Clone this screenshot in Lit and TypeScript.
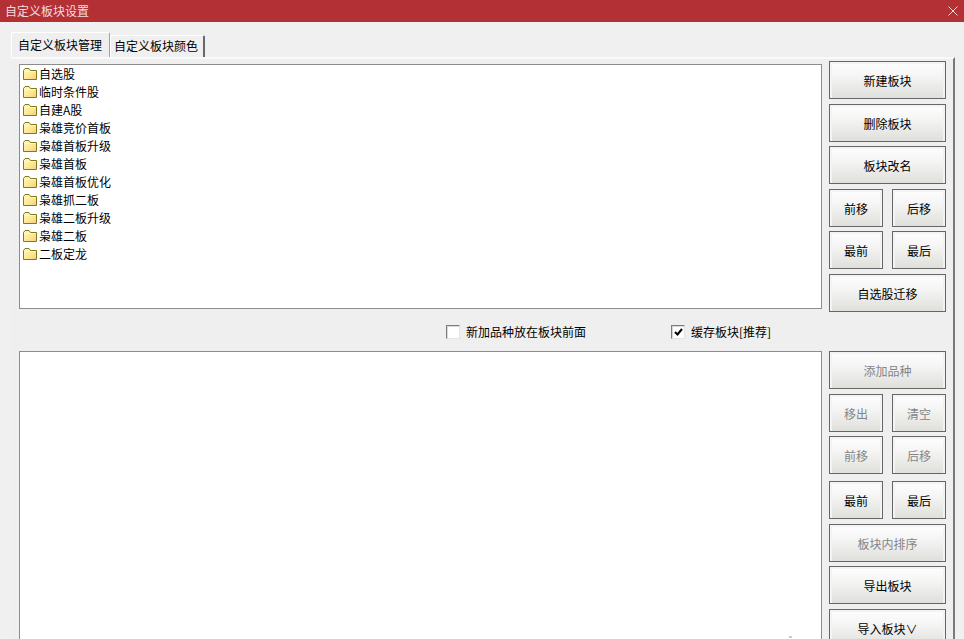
import { LitElement, html, css } from 'lit';
import { customElement } from 'lit/decorators.js';
import { classMap } from 'lit/directives/class-map.js';

type Btn = { label: string; off?: boolean };
type BtnRow = { gap: number; btns: Btn[] };

const FOLDERS = [
  '自选股', '临时条件股', '自建A股', '枭雄竞价首板', '枭雄首板升级', '枭雄首板',
  '枭雄首板优化', '枭雄抓二板', '枭雄二板升级', '枭雄二板', '二板定龙',
];

const TOP_BTNS: BtnRow[] = [
  { gap: 0, btns: [{ label: '新建板块' }] },
  { gap: 5, btns: [{ label: '删除板块' }] },
  { gap: 4, btns: [{ label: '板块改名' }] },
  { gap: 5, btns: [{ label: '前移' }, { label: '后移' }] },
  { gap: 4, btns: [{ label: '最前' }, { label: '最后' }] },
  { gap: 5, btns: [{ label: '自选股迁移' }] },
];

const BOTTOM_BTNS: BtnRow[] = [
  { gap: 0, btns: [{ label: '添加品种', off: true }] },
  { gap: 5, btns: [{ label: '移出', off: true }, { label: '清空', off: true }] },
  { gap: 4, btns: [{ label: '前移', off: true }, { label: '后移', off: true }] },
  { gap: 7, btns: [{ label: '最前' }, { label: '最后' }] },
  { gap: 5, btns: [{ label: '板块内排序', off: true }] },
  { gap: 4, btns: [{ label: '导出板块' }] },
  { gap: 5, btns: [{ label: '导入板块∨' }] },
];

@customElement('app-root')
export class AppRoot extends LitElement {
  static styles = css`
    :host {
      display: block;
      width: 964px;
      height: 639px;
      overflow: hidden;
      background: #f0f0f0;
      font-family: "Noto Sans CJK SC", "Liberation Sans", sans-serif;
      font-size: 12px;
      color: #000;
    }

    .titlebar {
      height: 22px;
      background: #b33035;
      color: #f3dcdc;
      display: flex;
      align-items: center;
      justify-content: space-between;
      padding: 0 6px 1px 5px;
      box-sizing: border-box;
      line-height: 16px;
    }

    .close {
      width: 10px;
      height: 10px;
      display: block;
    }

    .tabs {
      display: flex;
      align-items: flex-end;
      padding: 10px 0 0 11px;
      height: 25px;
    }

    .tab {
      box-sizing: border-box;
      background: #f0f0f0;
      border: 1px solid #a0a0a0;
      border-bottom: none;
      border-top-color: #fff;
      border-left-color: #fff;
      border-right: 2px solid #696969;
      border-radius: 2px 2px 0 0;
      height: 22px;
      width: 95px;
      padding: 0 0 0 3px;
      line-height: 20px;
      margin-left: 0;
    }

    .tab.active {
      height: 25px;
      width: 99px;
      padding: 2px 0 0 6px;
      background: #efefef;
      border-right: 1px solid #a0a0a0;
      line-height: 20px;
    }

    .page {
      width: 944px;
      height: 582px;
      box-sizing: border-box;
      margin-left: 11px;
      border-top: 2px solid #fafafa;
      border-right: 2px solid #7a7a7a;
      padding: 2px 7px 0 8px;
      background: #efefef;
    }

    .section {
      display: grid;
      grid-template-columns: 803px 117px;
      column-gap: 7px;
      align-items: start;
    }

    .list {
      box-sizing: border-box;
      background: #fff;
      border: 1px solid #8c8c8c;
      position: relative;
    }

    .list.top {
      margin-top: 3px;
      height: 245px;
      padding: 0 0 0 2px;
    }

    .list.bottom {
      height: 320px;
    }

    .item {
      display: flex;
      align-items: center;
      height: 18px;
      line-height: 18px;
    }

    .item svg {
      width: 16px;
      height: 14px;
      margin-right: 1px;
      flex: none;
    }

    .speck {
      position: absolute;
      left: 769px;
      top: 284px;
      width: 3px;
      height: 2px;
      background: #a8d4f0;
    }

    .checks {
      height: 39px;
      display: flex;
      align-items: center;
      padding: 1px 0 0 427px;
      box-sizing: border-box;
    }

    .check {
      display: flex;
      align-items: center;
      gap: 6px;
      line-height: 16px;
    }

    .check + .check {
      margin-left: 85px;
    }

    .box {
      width: 14px;
      height: 14px;
      box-sizing: border-box;
      background: #fff;
      border: 1px solid;
      border-color: #7d7d7d #e4e4e4 #e4e4e4 #7d7d7d;
      box-shadow: inset 1px 1px 0 #d8d8d8;
      display: flex;
      align-items: center;
      justify-content: center;
    }

    .box svg {
      width: 9px;
      height: 8px;
      display: block;
    }

    .row {
      display: flex;
      gap: 9px;
    }

    .gap-4 { margin-top: 4px; }
    .gap-5 { margin-top: 5px; }
    .gap-7 { margin-top: 7px; }

    .btn {
      flex: 1;
      height: 38px;
      box-sizing: border-box;
      border: 1px solid #666;
      background: linear-gradient(#fefefe, #f6f6f6 35%, #dfdfdb);
      box-shadow: inset 2px 2px 0 #f4f4f4, inset -2px 0 0 #f2f2f2;
      display: flex;
      align-items: center;
      justify-content: center;
      line-height: 16px;
      padding-top: 1px;
    }

    .btn.off {
      color: #858585;
    }
  `;

  renderFolder() {
    return html`<svg viewBox="0 0 16 14">
      <defs>
        <linearGradient id="fold" x1="0" y1="0" x2="1" y2="1">
          <stop offset="0" stop-color="#fff9c8" />
          <stop offset="0.6" stop-color="#fde68c" />
          <stop offset="1" stop-color="#f6c98a" />
        </linearGradient>
      </defs>
      <path d="M1.5 12.5V3.5L3 1.5H7L8.5 3.5H14.5V12.5Z" fill="url(#fold)" stroke="#7f7a1e" stroke-width="1" />
      <path d="M2.5 4.5H13.5" stroke="#fff6c0" stroke-width="1" />
    </svg>`;
  }

  renderButtons(rows: BtnRow[]) {
    return html`<div>
      ${rows.map(
        (r) => html`<div class="row ${r.gap ? `gap-${r.gap}` : ''}">
          ${r.btns.map(
            (b) => html`<div class=${classMap({ btn: true, off: !!b.off })}>${b.label}</div>`
          )}
        </div>`
      )}
    </div>`;
  }

  render() {
    return html`
      <div class="titlebar">
        <span>自定义板块设置</span>
        <svg class="close" viewBox="0 0 10 10">
          <path d="M0.5 0.5L9.5 9.5M9.5 0.5L0.5 9.5" stroke="#f0d8d8" stroke-width="1" />
        </svg>
      </div>
      <div class="tabs">
        <div class="tab active">自定义板块管理</div>
        <div class="tab">自定义板块颜色</div>
      </div>
      <div class="page">
        <div class="section">
          <div class="list top">
            ${FOLDERS.map((f) => html`<div class="item">${this.renderFolder()}<span>${f}</span></div>`)}
          </div>
          ${this.renderButtons(TOP_BTNS)}
        </div>
        <div class="checks">
          <div class="check"><span class="box"></span><span>新加品种放在板块前面</span></div>
          <div class="check">
            <span class="box">
              <svg viewBox="0 0 9 8"><path d="M1 4L3.5 6.5L8 1" fill="none" stroke="#000" stroke-width="2" /></svg>
            </span>
            <span>缓存板块[推荐]</span>
          </div>
        </div>
        <div class="section">
          <div class="list bottom"><div class="speck"></div></div>
          ${this.renderButtons(BOTTOM_BTNS)}
        </div>
      </div>
    `;
  }
}
